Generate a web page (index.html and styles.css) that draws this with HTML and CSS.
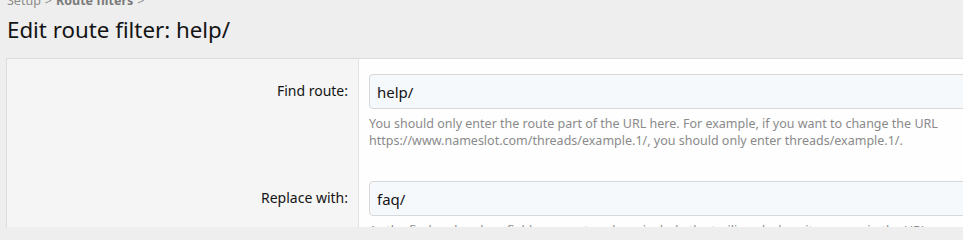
FILE: index.html
```html
<!DOCTYPE html>
<html lang="en">
<head>
<meta charset="utf-8">
<title>Edit route filter: help/</title>
<link rel="stylesheet" href="styles.css">
</head>
<body>
<div class="page">
  <nav class="crumbs">
    <span class="crumb">Setup</span><span class="sep">&gt;</span><span class="crumb crumb-strong">Route filters</span><span class="sep">&gt;</span>
  </nav>
  <h1 class="title">Edit route filter: help/</h1>
  <div class="card">
    <div class="row">
      <div class="row-label"><label>Find route:</label></div>
      <div class="row-input">
        <div class="input">help/</div>
        <div class="hint">You should only enter the route part of the URL here. For example, if you want to change the URL<br>https://www.nameslot.com/threads/example.1/, you should only enter threads/example.1/.</div>
      </div>
    </div>
    <div class="row">
      <div class="row-label"><label>Replace with:</label></div>
      <div class="row-input">
        <div class="input">faq/</div>
        <div class="hint">As the find and replace fields are route values, include the trailing slash as it appears in the URL.</div>
      </div>
    </div>
  </div>
</div>
</body>
</html>
```
FILE: styles.css
```css
html, body {
  margin: 0;
  padding: 0;
  background: #eeeeee;
  overflow: hidden;
  height: 227px;
}
body {
  font-family: "Noto Sans", "Open Sans", sans-serif;
  color: #141414;
}
.page {
  padding: 0 0 0 6px;
}
.crumbs {
  margin-top: -7px;
  height: 16px;
  font-size: 12.5px;
  line-height: 16px;
  color: #8c8c8c;
  padding-left: 1px;
  display: flex;
  gap: 4px;
}
.crumb-strong {
  font-weight: 700;
  color: #7a7a7a;
}
.title {
  margin: 0;
  padding: 7px 0 0 1px;
  font-size: 22.3px;
  font-weight: 400;
  line-height: 28px;
  height: 30px;
  color: #141414;
}
.card {
  margin-top: 12px;
  width: 1000px;
  border: 1px solid #dcdcdc;
  background: #fefefe;
  display: flex;
  flex-direction: column;
}
.row {
  display: flex;
}
.row-label {
  width: 341px;
  flex: none;
  background: #f5f5f5;
  border-right: 1px solid #e2e2e2;
  padding: 15px 10px 0 0;
  text-align: right;
  font-size: 14px;
}
.row-label label {
  display: block;
  line-height: 33px;
  padding-top: 0;
}
.row-input {
  flex: 1;
  padding: 15px 0 17px 10px;
}
.input {
  height: 33px;
  border: 1px solid #d8d8d8;
  border-radius: 4px;
  background: #f6f9fc;
  padding: 0 7px;
  font-size: 15px;
  line-height: 34px;
  color: #141414;
}
.hint {
  margin-top: 6px;
  font-size: 12.5px;
  line-height: 17px;
  color: #8a8a8a;
}
```
